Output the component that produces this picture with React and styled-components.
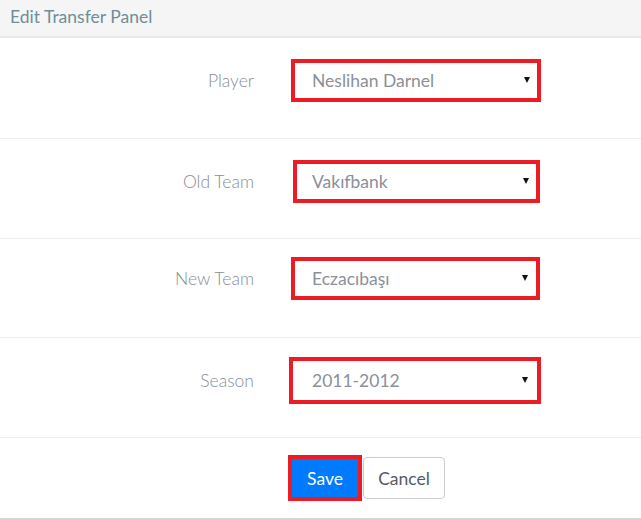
import React from "react";
import styled, { createGlobalStyle } from "styled-components";

const Global = createGlobalStyle`
  html, body { margin: 0; padding: 0; background: #ffffff; }
  body { font-family: Lato, "Open Sans", sans-serif; }
  * { box-sizing: border-box; }
`;

const Panel = styled.div`
  width: 641px;
  height: 520px;
  display: flex;
  flex-direction: column;
  border-bottom: 2px solid #d4d4d4;
  overflow: hidden;
`;

const Header = styled.div`
  height: 38px;
  background: #f5f5f5;
  border-bottom: 2px solid #e9e9e9;
  padding: 7px 10px 0;
  font-size: 17.5px;
  color: #6f8e98;
  line-height: 20px;
`;

const Row = styled.div`
  display: grid;
  grid-template-columns: 255px 1fr;
  column-gap: ${(p) => p.$gap}px;
  align-items: center;
  align-content: start;
  height: ${(p) => p.$h}px;
  padding-top: ${(p) => p.$pt}px;
  border-bottom: 1px solid #eeeeee;
`;

const Label = styled.label`
  text-align: right;
  padding-right: 1px;
  font-size: 17.5px;
  color: #878e94;
  font-weight: 300;
`;

const Highlight = styled.div`
  width: ${(p) => p.$w}px;
  height: ${(p) => p.$h || 43}px;
  border: 4px solid #ed1c24;
  position: relative;
  background: #fff;
`;

const Select = styled.select`
  appearance: none;
  -webkit-appearance: none;
  width: 100%;
  height: 100%;
  border: none;
  outline: none;
  background: transparent;
  padding: 0 0 0 ${(p) => p.$pl}px;
  font-family: Lato, "Open Sans", sans-serif;
  font-size: 17.5px;
  color: #8b909a;
  cursor: pointer;
`;

const Caret = styled.span`
  position: absolute;
  right: ${(p) => p.$r}px;
  top: 50%;
  margin-top: -4px;
  width: 0;
  height: 0;
  border-left: 3px solid transparent;
  border-right: 3px solid transparent;
  border-top: 6px solid #111;
  pointer-events: none;
`;

const Actions = styled.div`
  display: flex;
  align-items: flex-start;
  gap: 1px;
  height: 80px;
  padding-top: 17px;
  padding-left: 288px;
`;

const SaveFrame = styled.div`
  border: 4px solid #ed1c24;
  display: flex;
`;

const SaveButton = styled.button`
  width: 66px;
  height: 38px;
  border: none;
  background: #007bff;
  color: #ffffff;
  font-family: Lato, "Open Sans", sans-serif;
  font-size: 17.5px;
  padding: 0;
`;

const CancelButton = styled.button`
  margin-top: 2px;
  width: 82px;
  height: 42px;
  border: 1px solid #cccccc;
  border-radius: 4px;
  background: #ffffff;
  color: #555c63;
  font-family: Lato, "Open Sans", sans-serif;
  font-size: 17.5px;
  padding: 0;
`;

const fields = [
  { label: "Player", value: "Neslihan Darnel", h: 101, gap: 36, pt: 21, w: 250, pl: 17, r: 7 },
  { label: "Old Team", value: "Vakıfbank", h: 100, gap: 38, pt: 21, w: 247, pl: 15, r: 7 },
  { label: "New Team", value: "Eczacıbaşı", h: 99, gap: 36, pt: 18, w: 249, pl: 17, r: 8 },
  { label: "Season", value: "2011-2012", h: 100, gap: 34, pt: 19, bh: 47, w: 252, pl: 19, r: 9 },
];

export default function App() {
  return (
    <>
      <Global />
      <Panel>
        <Header>Edit Transfer Panel</Header>
        {fields.map((f) => (
          <Row key={f.label} $h={f.h} $gap={f.gap} $pt={f.pt}>
            <Label>{f.label}</Label>
            <Highlight $h={f.bh} $w={f.w}>
              <Select defaultValue={f.value} $pl={f.pl}>
                <option>{f.value}</option>
              </Select>
              <Caret $r={f.r} />
            </Highlight>
          </Row>
        ))}
        <Actions>
          <SaveFrame>
            <SaveButton>Save</SaveButton>
          </SaveFrame>
          <CancelButton>Cancel</CancelButton>
        </Actions>
      </Panel>
    </>
  );
}
